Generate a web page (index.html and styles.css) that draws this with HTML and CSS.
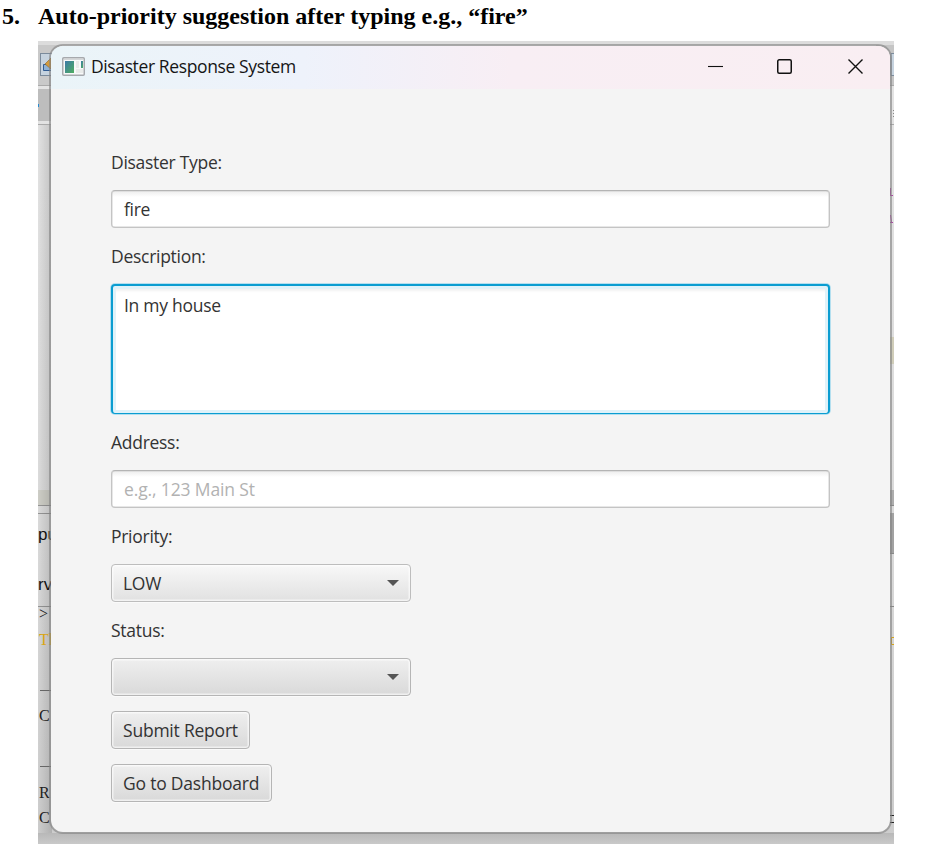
FILE: index.html
```html
<!DOCTYPE html>
<html lang="en">
<head>
<meta charset="utf-8">
<title>Disaster Response System</title>
<link rel="stylesheet" href="styles.css">
</head>
<body>
<h1 class="heading"><span class="num">5.</span><span class="heading-text">Auto-priority suggestion after typing e.g., “fire”</span></h1>
<div class="desktop">
  <svg class="backdrop" width="856" height="803" viewBox="38 41 856 803" aria-hidden="true">
    <defs>
      <linearGradient id="left" x1="0" x2="1"><stop offset="0" stop-color="#000" stop-opacity="0"/><stop offset="1" stop-color="#000" stop-opacity=".14"/></linearGradient>
      <linearGradient id="below" x1="0" y1="0" x2="0" y2="1"><stop offset="0" stop-color="#b8b8b8"/><stop offset="1" stop-color="#c9c9c9"/></linearGradient>
      <linearGradient id="side" x1="0" y1="0" x2="0" y2="1"><stop offset="0" stop-color="#e4e4e4"/><stop offset=".6" stop-color="#dadada"/><stop offset="1" stop-color="#cccccc"/></linearGradient>
    </defs>
    <rect x="38" y="41" width="856" height="803" fill="url(#side)"/>
    <rect x="38" y="41" width="856" height="4" fill="#dcdcdc"/>
    <rect x="38" y="45" width="24" height="40" fill="#c9c9c9"/>
    <rect x="38" y="85" width="14" height="1" fill="#aaa"/>
    <rect x="38" y="89" width="14" height="32" fill="#bdbdbd"/>
    <rect x="38" y="124" width="14" height="1" fill="#aaa"/>
    <rect x="40.500" y="53.500" width="14" height="22" fill="#c6d3df" stroke="#7b8b9c"/>
    <path d="M43.500 64.500h8v6h-8z" fill="#8fb2d6" stroke="#315c92"/><path d="M45 64l6-6v11z" fill="#d39b3c" stroke="#8d6427" stroke-width=".6"/>
    <rect x="38" y="104" width="1" height="3" fill="#268bd2"/>
    <rect x="38" y="490" width="14" height="15" fill="#cdcdc6"/>
    <path d="M38 505.500h14M38 513.500h14M38 606.500h14" stroke="#969696"/>
    <rect x="38" y="125" width="14" height="719" fill="url(#left)"/>
    <g class="ui"><text x="38" y="540">pu</text><text x="38" y="590">rv</text></g>
    <g class="console"><text x="39" y="619">&gt;</text><text x="39" y="645" class="warn">Th</text><text x="39" y="721">C</text><text x="39" y="798">R</text><text x="39" y="823">C</text></g>
    <path d="M40 690.500h11M40 766.500h11" stroke="#666"/>
    <rect x="876" y="45" width="18" height="40" fill="#c5c5c5"/>
    <path d="M894 53.500h-3v22h3" fill="#c6d3df" stroke="#7b8b9c"/>
    <path d="M890 85.500h4M890 124.500h4" stroke="#aaa"/>
    <path d="M893.500 110v1m0 2v1m0 2v1" stroke="#888"/>
    <path d="M890.500 188v7M890 195.500h3M890.500 215l1 7M890 222.500h3" stroke="#b040a8"/>
    <rect x="890" y="337" width="4" height="27" fill="#d0cdb9"/>
    <rect x="890" y="490" width="4" height="16" fill="#adadad"/>
    <rect x="890" y="513" width="4" height="41" fill="#a2a2a2"/>
    <path d="M890 505.500h4M890 553.500h4M890 606.500h4" stroke="#888"/>
    <path d="M894 637.500h-2.500v7h2.500" fill="none" stroke="#d9a514"/>
    <rect x="38" y="833" width="856" height="11" fill="url(#below)"/>
    <path d="M890 815.500h4M890 822.500h4" stroke="#222"/>
  </svg>
  <main class="window">
    <header class="titlebar">
      <svg class="app-icon" width="23" height="19" viewBox="0 0 23 19" aria-hidden="true">
        <defs><linearGradient id="app" x1="0" y1="0" x2="1" y2="1"><stop offset="0" stop-color="#3a79a8"/><stop offset="1" stop-color="#4fae5f"/></linearGradient></defs>
        <rect x=".75" y=".75" width="21.500" height="17.500" rx="1" fill="#f8f9f9" stroke="#a6a9ad" stroke-width="1.500"/>
        <path d="M2 2.500h19" stroke="#d5d8da"/>
        <rect x="3" y="4" width="9" height="12" fill="url(#app)"/>
        <path d="M14 4h3v7h-3zM14 12h7v4h-7z" fill="#e9ebe9"/>
        <rect x="19" y="4" width="2" height="7" fill="url(#app)"/>
      </svg>
      <span class="title">Disaster Response System</span>
      <svg class="controls" width="156" height="16" viewBox="0 0 156 16" fill="none" stroke="#111" aria-hidden="true">
        <path d="M0 8.500h15" stroke-width="1.100"/>
        <rect x="69.750" y="1.750" width="13.500" height="13.500" rx="1.500" stroke-width="1.500"/>
        <path d="M140.500 1.500l14 14M154.500 1.500l-14 14" stroke-width="1.400"/>
      </svg>
    </header>
    <form class="form">
      <label class="label l-type">Disaster Type:</label>
      <div class="field">fire</div>
      <label class="label">Description:</label>
      <div class="field area">In my house</div>
      <label class="label">Address:</label>
      <div class="field hint">e.g., 123 Main St</div>
      <label class="label">Priority:</label>
      <div class="combo light"><span>LOW</span><i class="arrow"></i></div>
      <label class="label">Status:</label>
      <div class="combo"><span></span><i class="arrow"></i></div>
      <button type="button" class="btn submit">Submit Report</button>
      <button type="button" class="btn dash">Go to Dashboard</button>
    </form>
  </main>
</div>
</body>
</html>
```
FILE: styles.css
```css
* { box-sizing: border-box; }
body { margin: 0; height: 850px; overflow: hidden; background: #fff; font-family: "Open Sans", "Noto Sans", sans-serif; }
.heading { margin: 0; height: 41px; padding-left: 2px; display: flex; font: bold 24px/33px "Liberation Serif", serif; color: #000; white-space: nowrap; }
.num { width: 36px; }
.desktop { position: relative; width: 856px; height: 803px; margin-left: 38px; padding: 5px 0 0 13px; overflow: hidden; }
.backdrop { position: absolute; left: 0; top: 0; }
.ui { font: 17px "Liberation Sans", sans-serif; fill: #111; }
.console { font: 16px "Liberation Serif", serif; fill: #222; }
.console .warn { fill: #d9a514; }
.window { position: relative; width: 839px; height: 786px; border-radius: 12px; background: #f4f4f4; box-shadow: 0 0 0 2px rgba(130,130,130,.62); }
.titlebar { height: 43px; padding: 0 26px 3px 11px; display: flex; align-items: center; border-radius: 12px 12px 0 0; background: linear-gradient(90deg, #eaf4f8 0%, #eef2fb 30%, #f8eef4 55%, #f9eef2 100%); }
.app-icon { margin-right: 6px; }
.title { font-size: 17.5px; line-height: 24px; color: #151515; letter-spacing: -0.38px; white-space: nowrap; }
.controls { margin-left: auto; }
.form { display: flex; flex-direction: column; align-items: flex-start; gap: 15px; padding: 60px 60px 0; font-size: 17.5px; color: #333; white-space: nowrap; letter-spacing: -0.28px; }
.label { height: 26px; line-height: 26px; }
.field { width: 719px; height: 38px; padding: 0 12px; border: 1px solid #c4c4c4; border-top-color: #b4b4b4; border-radius: 4px; background: linear-gradient(#ededed, #fff 6px); line-height: 37px; box-shadow: inset 0 0 0 .5px #cfcfcf; }
.area { height: 130px; line-height: 38px; border: 2px solid #0a9dd1; border-bottom-width: 1.5px; padding: 0 11px; background: #fff; box-shadow: 0 0 0 1px #b4dfef, inset 0 0 0 3px #e0f2f9, inset 0 7px 3px -2px #f2f2f2; }
.hint { color: #b2b2b2; letter-spacing: -0.13px; }
.combo, .btn { height: 38px; border: 1px solid #b5b5b5; border-radius: 4px; background: linear-gradient(#efefef, #d9d9d9); box-shadow: inset 0 0 0 1.5px rgba(255,255,255,.6), 0 1px 0 #fafafa; }
.combo { width: 300px; padding: 0 11px; display: flex; align-items: center; justify-content: space-between; }
.light { background: linear-gradient(#f8f8f8, #e1e1e1); border-color: #bdbdbd; }
.arrow { width: 12px; height: 6px; background: #555; clip-path: polygon(0 0, 100% 0, 50% 100%); }
.btn { padding: 0 0 0 11px; font: inherit; letter-spacing: -0.22px; color: inherit; text-align: left; }
.submit { width: 139px; }
.dash { width: 161px; }
```
